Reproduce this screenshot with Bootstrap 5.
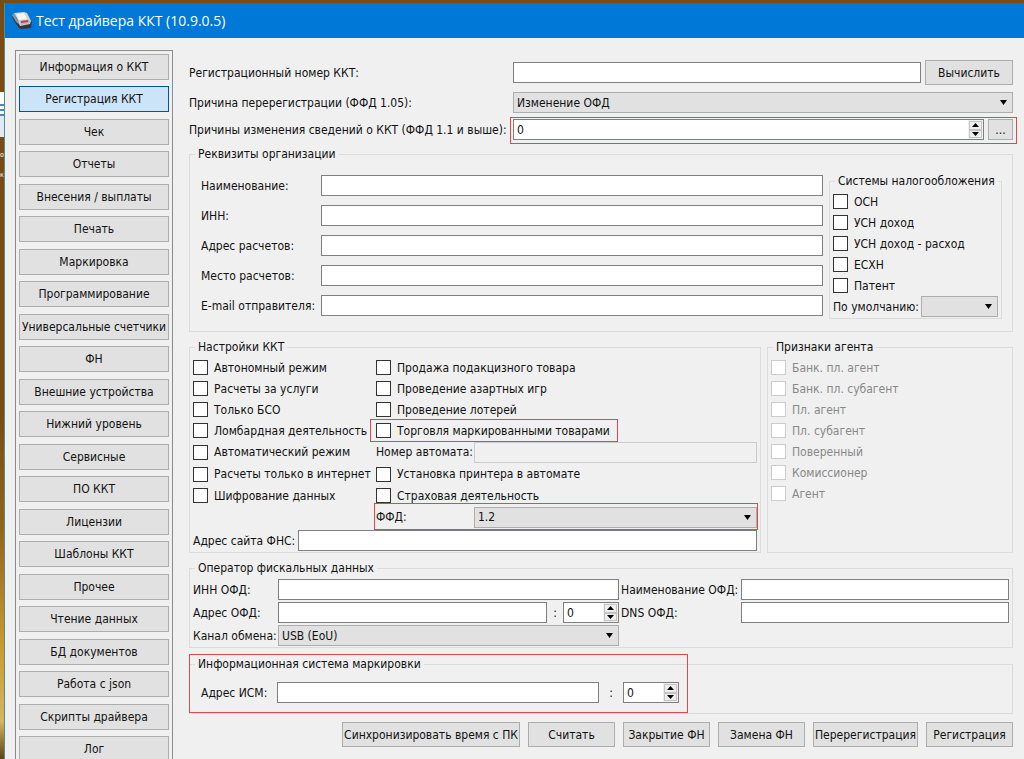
<!DOCTYPE html>
<html lang="ru">
<head>
<meta charset="utf-8">
<meta name="viewport" content="width=device-width, initial-scale=1">
<title>Тест драйвера ККТ</title>
<link href="https://cdn.jsdelivr.net/npm/bootstrap@5.3.0/dist/css/bootstrap.min.css" rel="stylesheet">
<style>
  body { font: 12px/16px "DejaVu Sans Condensed", "DejaVu Sans", sans-serif; color: #111; background: #7a4c14; }
  .desktop { padding: 3px 0 0 4px; background: linear-gradient(#7a4c14 0, #7a4c14 55%, #94661a 70%, #c99a2e 85%, #d8b560 95%, #5c4313 100%); }
  .desk-icon { left: 0; top: 92px; width: 4px; height: 45px; background: linear-gradient(#fff 0 12px, #4a86cf 12px 14px, #fff 14px 17px, #4a86cf 17px 19px, #fff 19px 22px, #4a86cf 22px 24px, #dfeaf8 24px); }
  .desk-text { left: 0; top: 145px; color: #fff; font-size: 7px; line-height: 20px; }
  .app-window { background: #f0f0f0; border-left: 1px solid #4f8f8c; }
  .title-bar { height: 35px; background: #0078d7; color: #fff; font: 14px/18px "Open Sans", "Noto Sans", sans-serif; padding: 0 7px; gap: 4px; }
  .client { padding: 12px 11px 0 10px; gap: 16px; }
  .side { width: 158px; border: 1px solid #8c8c8c; padding: 3px; gap: 6px; align-self: flex-start; }
  .side li:nth-child(even) { margin-bottom: 1px; }
  .win-btn { font-size: 12px; line-height: 16px; color: #111; background: #e1e1e1; border: 1px solid #adadad; border-radius: 0; padding: 0 1px; height: 25px; white-space: nowrap; }
  .side .win-btn { height: 26px; padding: 0; }
  .win-btn:hover { background: #e5f1fb; border-color: #0078d7; }
  .win-btn.active { background: #cce4f7; border-color: #00549a; color: #111; }
  .calc-btn { width: 88px; }
  .more-btn { width: 25px; height: 21px; }
  .panel { padding-top: 10px; min-width: 0; }
  .field, .pick { font-size: 12px; line-height: 16px; height: 21px; min-height: 0; border-radius: 0; border: 1px solid #7f7f7f; padding: 0 3px; color: #111; min-width: 0; }
  .field { background: #fff; }
  .field:disabled { background: #f0f0f0; border-color: #ccc; }
  .pick { border-color: #adadad; background-color: #e1e1e1; padding-right: 16px; background-size: 9px 5px; background-position: right 4px center;
    background-image: url("data:image/svg+xml,%3Csvg xmlns='http://www.w3.org/2000/svg' viewBox='0 0 9 5'%3E%3Cpath d='M1 0h7L4.500 5z'/%3E%3C/svg%3E"); }
  .spin { height: 21px; border: 1px solid #7f7f7f; background: #fff; }
  .spin input { border: 0; padding: 0 3px; min-width: 0; width: 100%; background: none; appearance: textfield; -moz-appearance: textfield; color: #111; }
  .spin input::-webkit-inner-spin-button { appearance: none; -webkit-appearance: none; }
  .spin .steps { width: 15px; flex: none; padding: 1px; background: #f0f0f0; }
  .spin .steps button { flex: 1; min-height: 0; padding: 0; border: 1px solid #c4c4c4; background: #eee; line-height: 0; }
  .spin svg { display: block; margin: auto; width: 7px; height: 4px; }
  .spin-sm { width: 56px; flex: none; }
  .top-label { width: 324px; flex: none; }
  .group { border: 1px solid #dcdcdc; padding: 0 3px 1px; min-width: 0; }
  .group > legend { float: none; width: auto; font-size: 12px; line-height: 16px; margin: 0 0 0 2px; padding: 0 3px; }
  .org { padding: 0 10px 12px 11px; margin-top: 6px; }
  .org > legend { margin-left: -6px; }
  .org-rows { display: grid; grid-template-columns: 120px 1fr; row-gap: 9px; padding-top: 13px; align-items: center; align-content: start; }
  .tax { width: 173px; margin: 11px 0 0 6px; }
  .tick { display: flex; align-items: center; height: 21px; gap: 6px; white-space: nowrap; }
  legend + .tick { margin-top: 2px; }
  .tick input { appearance: none; -webkit-appearance: none; flex: none; width: 15px; height: 15px; margin: 0; background: #fff; border: 1px solid #333; }
  .tick input:checked { background: #fff linear-gradient(#333, #333) center / 7px 7px no-repeat; }
  .tick input:disabled { border-color: #ccc; }
  .tick input:disabled + span { color: #888; }
  .opts { display: grid; grid-template-columns: 183px 1fr; grid-template-rows: repeat(4, 21px) 22px 22px 21px 22px; grid-auto-flow: column; align-items: center; padding-top: 2px; }
  .opt-label { width: 98px; flex: none; }
  .agents { width: 246px; flex: none; }
  .ofd { display: grid; grid-template-columns: 85px 14fr 122px 11fr; row-gap: 2px; align-items: center; padding-top: 3px; }
  .ofd-right { padding-left: 2px; }
  .ism-group { padding: 0 11px; margin-top: 8px; }
  .ism-group > legend { margin-left: -6px; }
  .ism { width: 478px; padding: 10px 0; }
  .marked { position: relative; }
  .marked::after { content: ""; position: absolute; inset: -2px -4px -4px -3px; border: 1px solid #e0484f; pointer-events: none; }
  .marked-tick { justify-self: start; }
  .marked-tick::after { inset: -1px -8px -1px -6px; }
  .marked-ffd::after { inset: -4px -1px -2px -2px; }
  .marked-ism::after { inset: -18px -9px 0 -12px; border-color: #e0484f; }
  .actions { gap: 8px; margin-top: 8px; }
  .actions .win-btn { min-width: 87px; }
  .colon { text-align: center; }
</style>
</head>
<body>
<div class="desktop vh-100 overflow-hidden position-relative">
  <div class="desk-icon position-absolute"></div>
  <div class="desk-text position-absolute">о<br>к</div>
  <div class="app-window h-100 d-flex flex-column position-relative overflow-hidden">
    <header class="title-bar d-flex align-items-center flex-shrink-0">
      <svg width="20" height="18" viewBox="0 0 20 18" aria-hidden="true">
        <path d="M0 4 2 9 7 16 9 17 19 16 20 10 16 6 6 8z" fill="#34363f"/>
        <path d="M0 3 2 1 5 7 8 9 8 13 4 10z" fill="#8d929b"/>
        <path d="M2 1 12 0 15 1 19 9 18 12 8 14 6 8z" fill="#cfd2d8"/>
        <path d="M4 2 12 1 15 7 7 8z" fill="#f6f6f6"/>
        <path d="M8 9 17 8 18 11 9 13z" fill="#b9b4ba"/>
        <path d="M9 10 16 9" stroke="#b5474a" stroke-width="2"/>
      </svg>
      <span>Тест драйвера ККТ (10.9.0.5)</span>
    </header>
    <div class="client d-flex flex-grow-1">
      <nav aria-label="Разделы" class="flex-shrink-0">
        <ul class="side list-unstyled d-flex flex-column mb-0">
          <li><button class="btn win-btn w-100" type="button">Информация о ККТ</button></li>
          <li><button class="btn win-btn w-100 active" type="button">Регистрация ККТ</button></li>
          <li><button class="btn win-btn w-100" type="button">Чек</button></li>
          <li><button class="btn win-btn w-100" type="button">Отчеты</button></li>
          <li><button class="btn win-btn w-100" type="button">Внесения / выплаты</button></li>
          <li><button class="btn win-btn w-100" type="button">Печать</button></li>
          <li><button class="btn win-btn w-100" type="button">Маркировка</button></li>
          <li><button class="btn win-btn w-100" type="button">Программирование</button></li>
          <li><button class="btn win-btn w-100" type="button">Универсальные счетчики</button></li>
          <li><button class="btn win-btn w-100" type="button">ФН</button></li>
          <li><button class="btn win-btn w-100" type="button">Внешние устройства</button></li>
          <li><button class="btn win-btn w-100" type="button">Нижний уровень</button></li>
          <li><button class="btn win-btn w-100" type="button">Сервисные</button></li>
          <li><button class="btn win-btn w-100" type="button">ПО ККТ</button></li>
          <li><button class="btn win-btn w-100" type="button">Лицензии</button></li>
          <li><button class="btn win-btn w-100" type="button">Шаблоны ККТ</button></li>
          <li><button class="btn win-btn w-100" type="button">Прочее</button></li>
          <li><button class="btn win-btn w-100" type="button">Чтение данных</button></li>
          <li><button class="btn win-btn w-100" type="button">БД документов</button></li>
          <li><button class="btn win-btn w-100" type="button">Работа с json</button></li>
          <li><button class="btn win-btn w-100" type="button">Скрипты драйвера</button></li>
          <li><button class="btn win-btn w-100" type="button">Лог</button></li>
        </ul>
      </nav>
      <main class="panel flex-grow-1">
        <div class="d-flex align-items-center">
          <label class="top-label" for="regnum">Регистрационный номер ККТ:</label>
          <input class="form-control field" id="regnum" type="text">
          <button class="btn win-btn calc-btn flex-shrink-0 ms-1" type="button">Вычислить</button>
        </div>
        <div class="d-flex align-items-center" style="margin-top:7px">
          <label class="top-label" for="reason">Причина перерегистрации (ФФД 1.05):</label>
          <select class="form-select pick" id="reason"><option>Изменение ОФД</option></select>
        </div>
        <div class="d-flex align-items-center" style="margin-top:6px">
          <label class="top-label" for="reasons">Причины изменения сведений о ККТ (ФФД 1.1 и выше):</label>
          <div class="marked d-flex flex-grow-1 gap-1">
            <div class="spin d-flex flex-grow-1">
              <input id="reasons" type="number" value="0">
              <div class="steps d-flex flex-column">
                <button type="button" aria-label="Больше"><svg viewBox="0 0 7 4"><path d="M0 4h7L3.500 0z"/></svg></button>
                <button type="button" aria-label="Меньше"><svg viewBox="0 0 7 4"><path d="M0 0h7L3.500 4z"/></svg></button>
              </div>
            </div>
            <button class="btn win-btn more-btn" type="button">...</button>
          </div>
        </div>

        <fieldset class="group org">
          <legend>Реквизиты организации</legend>
          <div class="d-flex">
            <div class="org-rows flex-grow-1">
              <label for="o1">Наименование:</label><input class="form-control field" id="o1" type="text">
              <label for="o2">ИНН:</label><input class="form-control field" id="o2" type="text">
              <label for="o3">Адрес расчетов:</label><input class="form-control field" id="o3" type="text">
              <label for="o4">Место расчетов:</label><input class="form-control field" id="o4" type="text">
              <label for="o5">E-mail отправителя:</label><input class="form-control field" id="o5" type="text">
            </div>
            <fieldset class="group tax flex-shrink-0 align-self-start">
              <legend>Системы налогообложения</legend>
              <label class="tick"><input type="checkbox"><span>ОСН</span></label>
              <label class="tick"><input type="checkbox"><span>УСН доход</span></label>
              <label class="tick"><input type="checkbox"><span>УСН доход - расход</span></label>
              <label class="tick"><input type="checkbox"><span>ЕСХН</span></label>
              <label class="tick"><input type="checkbox"><span>Патент</span></label>
              <div class="d-flex align-items-center">
                <label class="flex-shrink-0" style="width:88px" for="deftax">По умолчанию:</label>
                <select class="form-select pick" id="deftax"><option></option></select>
              </div>
            </fieldset>
          </div>
        </fieldset>

        <div class="d-flex" style="margin-top:7px;gap:6px">
          <fieldset class="group flex-grow-1">
            <legend>Настройки ККТ</legend>
            <div class="opts">
              <label class="tick"><input type="checkbox"><span>Автономный режим</span></label>
              <label class="tick"><input type="checkbox"><span>Расчеты за услуги</span></label>
              <label class="tick"><input type="checkbox"><span>Только БСО</span></label>
              <label class="tick"><input type="checkbox"><span>Ломбардная деятельность</span></label>
              <label class="tick"><input type="checkbox"><span>Автоматический режим</span></label>
              <label class="tick"><input type="checkbox"><span>Расчеты только в интернет</span></label>
              <label class="tick"><input type="checkbox"><span>Шифрование данных</span></label>
              <span></span>
              <label class="tick"><input type="checkbox"><span>Продажа подакцизного товара</span></label>
              <label class="tick"><input type="checkbox"><span>Проведение азартных игр</span></label>
              <label class="tick"><input type="checkbox"><span>Проведение лотерей</span></label>
              <label class="tick marked marked-tick"><input type="checkbox"><span>Торговля маркированными товарами</span></label>
              <div class="d-flex align-items-center">
                <label class="opt-label" for="autonum">Номер автомата:</label>
                <input class="form-control field" id="autonum" type="text" disabled>
              </div>
              <label class="tick"><input type="checkbox"><span>Установка принтера в автомате</span></label>
              <label class="tick"><input type="checkbox"><span>Страховая деятельность</span></label>
              <div class="marked marked-ffd d-flex align-items-center">
                <label class="opt-label" for="ffd">ФФД:</label>
                <select class="form-select pick" id="ffd"><option>1.2</option></select>
              </div>
            </div>
            <div class="d-flex align-items-center" style="margin-top:2px">
              <label class="flex-shrink-0" style="width:105px" for="fns">Адрес сайта ФНС:</label>
              <input class="form-control field" id="fns" type="text">
            </div>
          </fieldset>
          <fieldset class="group agents">
            <legend>Признаки агента</legend>
            <label class="tick"><input type="checkbox" disabled><span>Банк. пл. агент</span></label>
            <label class="tick"><input type="checkbox" disabled><span>Банк. пл. субагент</span></label>
            <label class="tick"><input type="checkbox" disabled><span>Пл. агент</span></label>
            <label class="tick"><input type="checkbox" disabled><span>Пл. субагент</span></label>
            <label class="tick"><input type="checkbox" disabled><span>Поверенный</span></label>
            <label class="tick"><input type="checkbox" disabled><span>Комиссионер</span></label>
            <label class="tick"><input type="checkbox" disabled><span>Агент</span></label>
          </fieldset>
        </div>

        <fieldset class="group" style="margin-top:7px">
          <legend>Оператор фискальных данных</legend>
          <div class="ofd">
            <label for="f1">ИНН ОФД:</label><input class="form-control field" id="f1" type="text">
            <label class="ofd-right" for="f2">Наименование ОФД:</label><input class="form-control field" id="f2" type="text">
            <label for="f3">Адрес ОФД:</label>
            <div class="d-flex align-items-center">
              <input class="form-control field" id="f3" type="text">
              <span class="colon flex-shrink-0" style="width:16px">:</span>
              <div class="spin spin-sm d-flex">
                <input type="number" value="0" aria-label="Порт ОФД">
                <div class="steps d-flex flex-column">
                  <button type="button" aria-label="Больше"><svg viewBox="0 0 7 4"><path d="M0 4h7L3.500 0z"/></svg></button>
                  <button type="button" aria-label="Меньше"><svg viewBox="0 0 7 4"><path d="M0 0h7L3.500 4z"/></svg></button>
                </div>
              </div>
            </div>
            <label class="ofd-right" for="f4">DNS ОФД:</label><input class="form-control field" id="f4" type="text">
            <label for="f5">Канал обмена:</label>
            <select class="form-select pick" id="f5"><option>USB (EoU)</option></select>
          </div>
        </fieldset>

        <fieldset class="group ism-group">
          <legend>Информационная система маркировки</legend>
          <div class="ism marked marked-ism d-flex align-items-center">
            <label class="flex-shrink-0" style="width:76px" for="ism">Адрес ИСМ:</label>
            <input class="form-control field" id="ism" type="text">
            <span class="colon flex-shrink-0" style="width:24px">:</span>
            <div class="spin spin-sm d-flex">
              <input type="number" value="0" aria-label="Порт ИСМ">
              <div class="steps d-flex flex-column">
                <button type="button" aria-label="Больше"><svg viewBox="0 0 7 4"><path d="M0 4h7L3.500 0z"/></svg></button>
                <button type="button" aria-label="Меньше"><svg viewBox="0 0 7 4"><path d="M0 0h7L3.500 4z"/></svg></button>
              </div>
            </div>
          </div>
        </fieldset>

        <div class="actions d-flex justify-content-end">
          <button class="btn win-btn" type="button">Синхронизировать время с ПК</button>
          <button class="btn win-btn" type="button">Считать</button>
          <button class="btn win-btn" type="button">Закрытие ФН</button>
          <button class="btn win-btn" type="button">Замена ФН</button>
          <button class="btn win-btn" type="button">Перерегистрация</button>
          <button class="btn win-btn" type="button">Регистрация</button>
        </div>
      </main>
    </div>
  </div>
</div>
<script src="https://cdn.jsdelivr.net/npm/bootstrap@5.3.0/dist/js/bootstrap.bundle.min.js"></script>
</body>
</html>
